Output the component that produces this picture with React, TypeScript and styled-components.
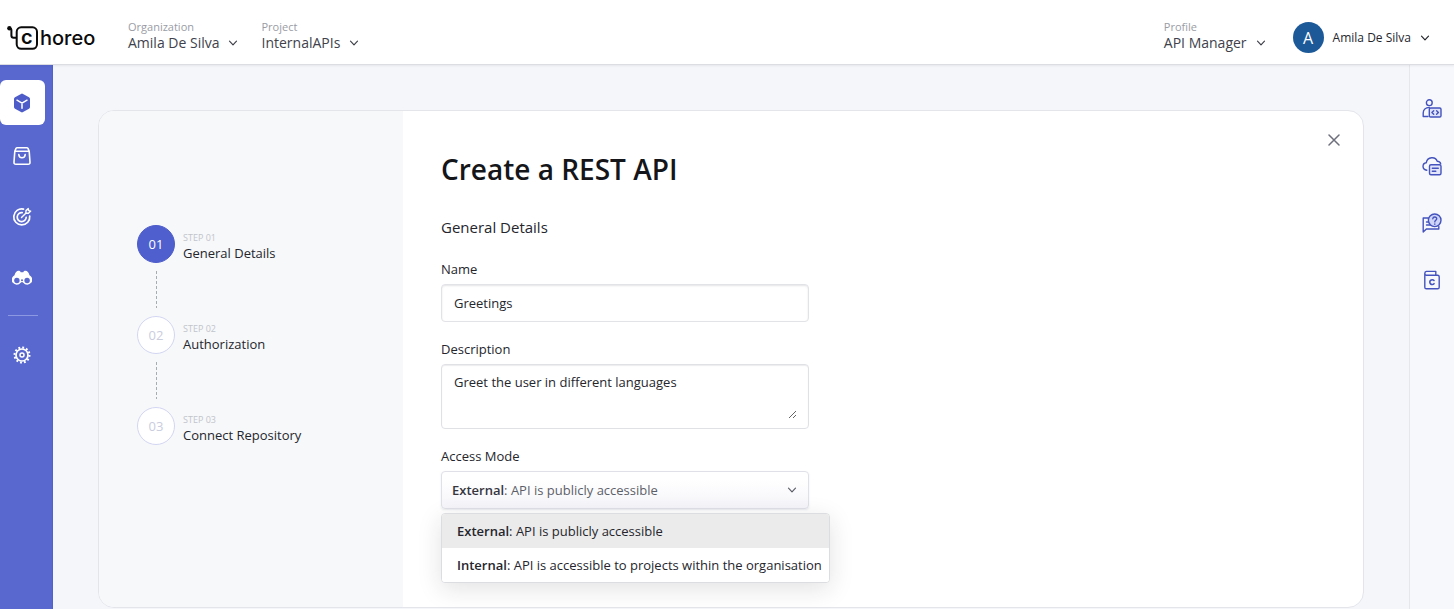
import React, { useState } from "react";
import styled, { createGlobalStyle } from "styled-components";

const GlobalStyle = createGlobalStyle`
  *, *::before, *::after { box-sizing: border-box; }
  body {
    margin: 0;
    font-family: "Open Sans", "Liberation Sans", sans-serif;
    font-size: 13px;
    line-height: 20px;
    color: #25262d;
    background: #f7f8fb;
  }
  button, input, textarea, select { font: inherit; color: inherit; }
  button { border: 0; padding: 0; background: none; cursor: pointer; }
`;

const Page = styled.div`
  display: flex;
  flex-direction: column;
  min-height: 100vh;
`;

const Header = styled.header`
  display: flex;
  align-items: center;
  height: 65px;
  padding: 11px 24px 0 7px;
  background: #fff;
  border-bottom: 1px solid #dcdde2;
  box-shadow: 0 1px 2px rgba(40, 45, 80, 0.08);
  z-index: 1;
`;

const Logo = styled.a`
  display: flex;
  align-items: center;
  width: 121px;
  color: #0b0b0c;
  font-family: Inter, sans-serif;
  font-size: 20px;
  font-weight: 500;
  line-height: 24px;
  text-decoration: none;
`;

const Switchers = styled.div`
  display: flex;
  flex: 1;
  gap: 23px;
`;

const Switcher = styled.button`
  display: flex;
  align-items: flex-end;
  gap: 9px;
  padding-bottom: 4px;
  text-align: left;
  color: #40424b;
  font-size: 14px;
  line-height: 17px;
  svg { margin-bottom: 3px; }
`;

const SwitcherText = styled.span`
  display: flex;
  flex-direction: column;
`;

const Caption = styled.span`
  color: #9a9ca5;
  font-size: 11px;
  line-height: 14px;
`;

const UserButton = styled.button`
  display: flex;
  align-items: center;
  gap: 9px;
  margin-left: 27px;
  font-size: 12px;
`;

const Avatar = styled.span`
  display: grid;
  place-items: center;
  width: 31px;
  height: 31px;
  border-radius: 50%;
  background: #1c5998;
  color: #fff;
  font-size: 16px;
`;

const Body = styled.div`
  display: flex;
  flex: 1;
`;

const Sidebar = styled.nav`
  display: flex;
  flex-direction: column;
  width: 53px;
  padding: 15px 8px 0 0;
  background: #5868cf;
  border-right: 1px solid #5161c8;
`;

const NavItem = styled.a<{ $active?: boolean }>`
  display: grid;
  place-items: center;
  width: 45px;
  height: ${(p) => (p.$active ? "45px" : "61px")};
  padding-right: 1px;
  border-radius: 6px;
  background: ${(p) => (p.$active ? "#fff" : "transparent")};
  color: ${(p) => (p.$active ? "#4d5cc8" : "#fff")};
`;

const NavDivider = styled.hr`
  width: 30px;
  height: 1px;
  margin: 7px 0 8px 8px;
  border: 0;
  background: #8c98e2;
`;

const Main = styled.main`
  display: flex;
  flex: 1;
  padding: 45px 45px 1px;
  background: #f5f6fa;
`;

const Rail = styled.aside`
  display: flex;
  flex-direction: column;
  width: 45px;
  padding-top: 15px;
  border-left: 1px solid #e6e7ec;
  background: #f7f8fb;
`;

const RailItem = styled.button`
  display: grid;
  place-items: center;
  height: 57px;
  color: #4453bd;
`;

const Card = styled.section`
  display: flex;
  flex: 1;
  border: 1px solid #e3e5eb;
  border-radius: 16px;
  background: #fff;
`;

const StepsPanel = styled.aside`
  width: 304px;
  padding: 114px 0 0 38px;
  border-radius: 15px 0 0 15px;
  background: #f7f8fa;
`;

const StepList = styled.ol`
  margin: 0;
  padding: 0;
  list-style: none;
`;

const Step = styled.li`
  display: grid;
  grid-template-columns: 38px 1fr;
  column-gap: 8px;
`;

const StepCircle = styled.span<{ $active?: boolean }>`
  display: grid;
  place-items: center;
  height: 38px;
  border: 1px solid ${(p) => (p.$active ? "#4d5ccb" : "#d3d6f2")};
  border-radius: 50%;
  background: ${(p) => (p.$active ? "#4f5fcd" : "#fff")};
  color: ${(p) => (p.$active ? "#fff" : "#cacdde")};
`;

const StepText = styled.span`
  display: flex;
  flex-direction: column;
  justify-content: center;
  padding-top: 5px;
  font-weight: 500;
  line-height: 18px;
`;

const StepCaption = styled.span`
  color: #c2c4ca;
  font-size: 9px;
  line-height: 12px;
`;

const Connector = styled.span`
  justify-self: center;
  width: 1px;
  height: 37px;
  margin: 8px 0;
  background: repeating-linear-gradient(#a9abb2 0 3px, transparent 3px 5px);
`;

const Content = styled.div`
  flex: 1;
  padding: 40px 38px 0;
`;

const CloseButton = styled.button`
  display: grid;
  place-items: center;
  align-self: flex-start;
  width: 24px;
  height: 24px;
  margin: 17px 17px 0 0;
  color: #6d6f7d;
`;

const Title = styled.h1`
  margin: 0;
  color: #15161a;
  font-size: 28px;
  font-weight: 600;
  line-height: 36px;
`;

const SectionTitle = styled.h2`
  margin: 30px 0 22px;
  font-size: 15px;
  font-weight: 500;
  line-height: 20px;
`;

const Form = styled.form`
  display: flex;
  flex-direction: column;
  gap: 17px;
  max-width: 368px;
`;

const Field = styled.div`
  position: relative;
  display: flex;
  flex-direction: column;
  gap: 5px;
`;

const TextInput = styled.input`
  width: 100%;
  height: 38px;
  padding: 0 12px;
  border: 1px solid #e2e3e7;
  border-radius: 4px;
  box-shadow: inset 0 1px 2px rgba(30, 30, 50, 0.12);
  background: #fff;
  outline: none;
`;

const AreaFrame = styled.div`
  display: flex;
  padding: 7px 11px 9px 12px;
  border: 1px solid #e0e1e5;
  border-radius: 4px;
  box-shadow: inset 0 1px 1px rgba(30, 30, 50, 0.08);
`;

const TextArea = styled.textarea`
  width: 100%;
  height: 47px;
  padding: 0;
  border: 0;
  background: transparent;
  outline: none;
  resize: vertical;
`;

const SelectFrame = styled.div`
  display: grid;
  height: 38px;
  border: 1px solid #e0e1e8;
  border-radius: 4px;
  background: linear-gradient(#fff 20%, #f5f5fa);
  box-shadow: 0 1px 2px rgba(40, 45, 80, 0.1);
  > * { grid-area: 1 / 1; }
`;

const SelectValue = styled.span`
  display: flex;
  align-items: center;
  justify-content: space-between;
  padding: 0 11px 0 10px;
  color: #5d5f68;
  strong { color: #35363d; }
`;

const NativeSelect = styled.select`
  width: 100%;
  opacity: 0;
  cursor: pointer;
`;

const Strong = styled.strong`
  font-weight: 600;
`;

const Menu = styled.ul`
  position: absolute;
  top: calc(100% + 4px);
  left: 0;
  margin: 0;
  padding: 0;
  overflow: hidden;
  border: 1px solid #dcdde0;
  border-radius: 4px;
  background: #fff;
  box-shadow: 0 6px 24px rgba(30, 32, 50, 0.13);
  list-style: none;
`;

const MenuItem = styled.li<{ $selected: boolean }>`
  padding: 7px 7px 7px 15px;
  white-space: nowrap;
  background: ${(p) => (p.$selected ? "#ebebeb" : "#fff")};
  cursor: pointer;
`;

const Chevron = () => (
  <svg width="10" height="10" viewBox="0 0 10 10" fill="none" stroke="currentColor" strokeWidth="1.2" strokeLinecap="round" strokeLinejoin="round" aria-hidden="true">
    <path d="M1.500 3.200 5 6.800l3.500-3.600" />
  </svg>
);

const LogoMark = () => (
  <svg width="33" height="26" viewBox="0 0 33 26" fill="none" stroke="currentColor" strokeWidth="2" aria-hidden="true">
    <circle cx="2.400" cy="3.200" r="2.200" fill="currentColor" stroke="none" />
    <path d="M2.400 3.200q2 .3 2 2v5.200q0 2.300 2.300 2.300h3" />
    <rect x="9.700" y="2.300" width="20.300" height="21.500" rx="4.500" />
    <text x="14" y="18.800" fontSize="20" fontWeight="600" fontFamily="Inter, sans-serif" fill="currentColor" stroke="none">c</text>
  </svg>
);

const CubeIcon = () => (
  <svg width="18" height="20" viewBox="0 0 18 20" aria-hidden="true">
    <path d="M8 .9q1-.6 2 0l6 3.400q1 .6 1 1.700v8q0 1.100-1 1.700l-6 3.400q-1 .6-2 0l-6-3.400q-1-.6-1-1.700V6q0-1.100 1-1.700z" fill="currentColor" />
    <path d="M4 7.200l5 2.900 5-2.900M9 10.100v5.200" fill="none" stroke="#fff" strokeWidth="1.500" strokeLinecap="round" />
  </svg>
);

const BagIcon = () => (
  <svg width="18" height="20" viewBox="0 0 18 20" fill="none" stroke="currentColor" strokeWidth="1.600" strokeLinecap="round" strokeLinejoin="round" aria-hidden="true">
    <path d="M1.800 5.300h14.400l.8 11q.1 2-1.900 2H2.900q-2 0-1.900-2zM1.800 5.300l1.200-2.900q.4-.7 1.200-.7h9.600q.8 0 1.200.7l1.200 2.900" />
    <path d="M5.800 8.500c.3 4.400 6.100 4.400 6.400 0" />
  </svg>
);

const TargetIcon = () => (
  <svg width="20" height="20" viewBox="0 0 20 20" fill="none" stroke="currentColor" strokeWidth="1.700" strokeLinecap="round" strokeLinejoin="round" aria-hidden="true">
    <path d="M11.500 2.100A8 8 0 1 0 17.700 9" />
    <path d="M10.200 5.700a4.500 4.500 0 1 0 4 4.600" />
    <path d="M9.500 10.500l4.300-4.200M13.800 6.300l.2-2.700 2.300-2 .4 2 2 .5-2.200 2.200z" strokeWidth="1.400" />
  </svg>
);

const BinocularsIcon = () => (
  <svg width="20" height="16" viewBox="0 0 20 16" aria-hidden="true">
    <path d="M2.500 5.200C3.300 2.500 4.800.8 6.400.8c1.200 0 1.900.5 2.300 1.400h2.600c.4-.9 1.100-1.400 2.300-1.400 1.600 0 3.100 1.700 3.900 4.400A5 5 0 1 1 11.300 12.700Q10 11.500 8.700 12.700A5 5 0 1 1 2.500 5.200z" fill="currentColor" />
    <circle cx="4.900" cy="10.500" r="2.700" fill="#5868cf" />
    <circle cx="15.100" cy="10.500" r="2.700" fill="#5868cf" />
    <circle cx="10" cy="10.300" r="1" fill="#5868cf" />
  </svg>
);

const GearIcon = () => (
  <svg width="20" height="20" viewBox="0 0 20 20" fill="none" stroke="currentColor" aria-hidden="true">
    <circle cx="10" cy="10" r="6" strokeWidth="1.700" />
    <circle cx="10" cy="10" r="7.500" strokeWidth="2" strokeDasharray="1.900 2.027" />
    <circle cx="10" cy="10" r="2" strokeWidth="1.500" />
  </svg>
);

const railSvg = {
  width: 20,
  height: 20,
  viewBox: "0 0 20 20",
  fill: "none",
  stroke: "currentColor",
  strokeWidth: 1.4,
  strokeLinecap: "round" as const,
  strokeLinejoin: "round" as const,
  "aria-hidden": true,
};

const DeveloperIcon = () => (
  <svg {...railSvg}>
    <circle cx="7.300" cy="3.700" r="2.900" />
    <path d="M6 17.500H1.200V14C1.200 10.800 3.600 8.500 7.300 8.500" />
    <rect x="7.300" y="9" width="11.700" height="9" rx="1.300" fill="#dfe3fa" />
    <path d="M11.700 11.700l-1.800 1.800 1.800 1.800M14.600 11.700l1.800 1.800-1.800 1.800" />
  </svg>
);

const CloudIcon = () => (
  <svg {...railSvg}>
    <path d="M4.800 14.200C-.2 13.500-.1 7.200 4.300 6.700 5.400.4 13.600.2 15.200 5.300q3 .3 3.500 2.500" />
    <rect x="7.500" y="8.800" width="11.500" height="10" rx="1.500" fill="#e3e6fb" />
    <path d="M10.300 12.200h6M10.300 15.200h3.500" />
  </svg>
);

const HelpIcon = () => (
  <svg {...railSvg}>
    <path d="M6 5H1.200v14l3.200-3h12.400v-2.500M4.500 9h2M4.500 12h4" />
    <circle cx="12.700" cy="7.300" r="6.300" fill="#cfd5f7" />
    <path d="M10.800 5.800c.2-2.500 4-2.200 3.900 0 0 1.500-1.900 1.400-1.900 3.100M12.800 11v.2" />
  </svg>
);

const DocsIcon = () => (
  <svg {...railSvg}>
    <path d="M2.800 3.500v13.700q0 1.600 1.600 1.600h11.200q1.600 0 1.600-1.600V6.800q0-1.600-1.600-1.600H4.400q-1.600 0-1.600-1.800t1.600-2h9.400v3.800" />
    <path d="M12 10.500a2.400 2.400 0 1 0 0 3.200" strokeWidth="1.600" />
  </svg>
);

const CloseIcon = () => (
  <svg width="12" height="12" viewBox="0 0 12 12" fill="none" stroke="currentColor" strokeWidth="1.500" strokeLinecap="round" aria-hidden="true">
    <path d="M1 1l10 10M11 1L1 11" />
  </svg>
);

const navItems = [
  { label: "Components", icon: <CubeIcon />, active: true },
  { label: "Marketplace", icon: <BagIcon /> },
  { label: "Insights", icon: <TargetIcon /> },
  { label: "Observability", icon: <BinocularsIcon /> },
];

const railItems = [
  { label: "Developer portal", icon: <DeveloperIcon /> },
  { label: "Cloud notes", icon: <CloudIcon /> },
  { label: "Help", icon: <HelpIcon /> },
  { label: "Documentation", icon: <DocsIcon /> },
];

const steps = ["General Details", "Authorization", "Connect Repository"];

const accessModes = [
  { name: "External", detail: "API is publicly accessible" },
  { name: "Internal", detail: "API is accessible to projects within the organisation" },
];

function HeaderSwitcher({ caption, value }: { caption: string; value: string }) {
  return (
    <Switcher type="button" aria-haspopup="menu">
      <SwitcherText>
        <Caption>{caption}</Caption>
        {value}
      </SwitcherText>
      <Chevron />
    </Switcher>
  );
}

export default function App() {
  const [mode, setMode] = useState(0);
  const selected = accessModes[mode];

  return (
    <Page>
      <GlobalStyle />
      <Header>
        <Logo href="#home">
          <LogoMark />
          horeo
        </Logo>
        <Switchers>
          <HeaderSwitcher caption="Organization" value="Amila De Silva" />
          <HeaderSwitcher caption="Project" value="InternalAPIs" />
        </Switchers>
        <HeaderSwitcher caption="Profile" value="API Manager" />
        <UserButton type="button" aria-haspopup="menu">
          <Avatar>A</Avatar>
          Amila De Silva
          <Chevron />
        </UserButton>
      </Header>
      <Body>
        <Sidebar aria-label="Main">
          {navItems.map((item) => (
            <NavItem key={item.label} href="#nav" aria-label={item.label} $active={item.active}>
              {item.icon}
            </NavItem>
          ))}
          <NavDivider />
          <NavItem href="#settings" aria-label="Settings">
            <GearIcon />
          </NavItem>
        </Sidebar>
        <Main>
          <Card>
            <StepsPanel>
              <StepList>
                {steps.map((step, i) => (
                  <Step key={step}>
                    <StepCircle $active={i === 0}>{`0${i + 1}`}</StepCircle>
                    <StepText>
                      <StepCaption>{`STEP 0${i + 1}`}</StepCaption>
                      {step}
                    </StepText>
                    {i < steps.length - 1 && <Connector />}
                  </Step>
                ))}
              </StepList>
            </StepsPanel>
            <Content>
              <Title>Create a REST API</Title>
              <SectionTitle>General Details</SectionTitle>
              <Form>
                <Field>
                  <label htmlFor="name">Name</label>
                  <TextInput id="name" defaultValue="Greetings" />
                </Field>
                <Field>
                  <label htmlFor="description">Description</label>
                  <AreaFrame>
                    <TextArea id="description" defaultValue="Greet the user in different languages" />
                  </AreaFrame>
                </Field>
                <Field>
                  <label htmlFor="access-mode">Access Mode</label>
                  <SelectFrame>
                    <SelectValue aria-hidden="true">
                      <span>
                        <Strong>{selected.name}</Strong>: {selected.detail}
                      </span>
                      <Chevron />
                    </SelectValue>
                    <NativeSelect id="access-mode" value={mode} onChange={(e) => setMode(Number(e.target.value))}>
                      {accessModes.map((m, i) => (
                        <option key={m.name} value={i}>{`${m.name}: ${m.detail}`}</option>
                      ))}
                    </NativeSelect>
                  </SelectFrame>
                  <Menu role="listbox" aria-label="Access Mode">
                    {accessModes.map((m, i) => (
                      <MenuItem key={m.name} role="option" aria-selected={i === mode} $selected={i === mode} onClick={() => setMode(i)}>
                        <Strong>{m.name}</Strong>: {m.detail}
                      </MenuItem>
                    ))}
                  </Menu>
                </Field>
              </Form>
            </Content>
            <CloseButton type="button" aria-label="Close">
              <CloseIcon />
            </CloseButton>
          </Card>
        </Main>
        <Rail aria-label="Tools">
          {railItems.map((item) => (
            <RailItem key={item.label} type="button" aria-label={item.label}>
              {item.icon}
            </RailItem>
          ))}
        </Rail>
      </Body>
    </Page>
  );
}
